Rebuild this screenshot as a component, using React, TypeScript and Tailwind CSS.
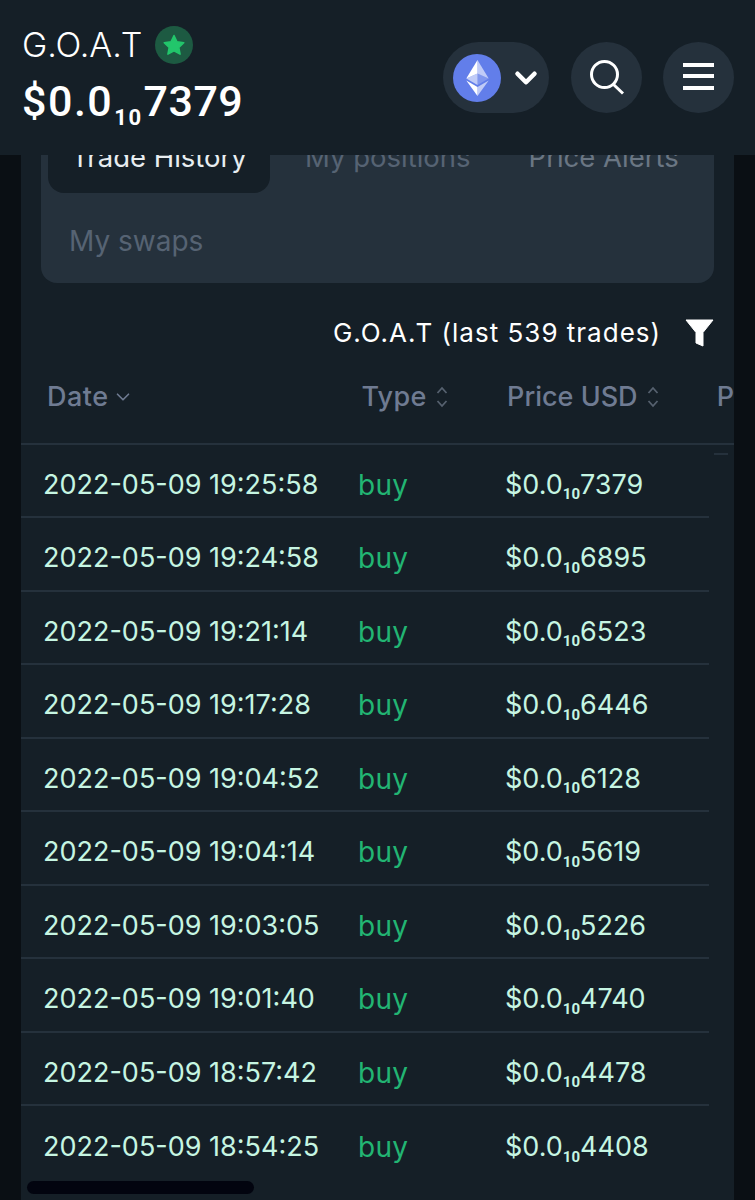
import { ChevronDown } from 'lucide-react'

const trades = [
  { date: '2022-05-09 19:25:58', price: '7379' },
  { date: '2022-05-09 19:24:58', price: '6895' },
  { date: '2022-05-09 19:21:14', price: '6523' },
  { date: '2022-05-09 19:17:28', price: '6446' },
  { date: '2022-05-09 19:04:52', price: '6128' },
  { date: '2022-05-09 19:04:14', price: '5619' },
  { date: '2022-05-09 19:03:05', price: '5226' },
  { date: '2022-05-09 19:01:40', price: '4740' },
  { date: '2022-05-09 18:57:42', price: '4478' },
  { date: '2022-05-09 18:54:25', price: '4408' },
]

function EthIcon() {
  return (
    <svg width="48" height="48" viewBox="0 0 48 48">
      <circle cx="24" cy="24" r="24" fill="#627eea" />
      <path d="M24.5 6v13.5l11.2 5z" fill="#fff" fillOpacity="0.6" />
      <path d="M24.5 6L13.3 24.5l11.2-5z" fill="#fff" />
      <path d="M24.5 33v9l11.2-15.6z" fill="#fff" fillOpacity="0.6" />
      <path d="M24.5 42v-9l-11.2-6.6z" fill="#fff" />
      <path d="M24.5 30.9l11.2-6.4-11.2-5z" fill="#fff" fillOpacity="0.2" />
      <path d="M13.3 24.5l11.2 6.4V19.5z" fill="#fff" fillOpacity="0.6" />
    </svg>
  )
}

function SortIcon() {
  return (
    <svg width="12" height="22" viewBox="0 0 12 22" fill="none" stroke="#56616f" strokeWidth="1.8" className="ml-[9px]">
      <path d="M1.5 7L6 2l4.500 5" />
      <path d="M1.5 15L6 20l4.500-5" />
    </svg>
  )
}

function App() {
  return (
    <div className="h-[1200px] overflow-hidden bg-[#0a0f14] font-['Inter',sans-serif]">
      {/* top bar */}
      <header className="relative z-10 flex h-[155px] items-start justify-between bg-[#151f27] pl-[22px] pr-[21px]">
        <div className="pt-[25px]">
          <div className="flex items-center">
            <span className="text-[34px] leading-[40px] font-light text-white">G.O.A.T</span>
            <span className="ml-[13px] flex h-[38px] w-[38px] items-center justify-center rounded-full bg-[#1d5a42]">
              <svg width="24" height="24" viewBox="0 0 24 24">
                <path
                  d="M12 2.500l3 6.300 6.800.9-5 4.700 1.300 6.800-6.100-3.300-6.100 3.300 1.300-6.800-5-4.700 6.800-.9z"
                  fill="#22c66b"
                  stroke="#22c66b"
                  strokeWidth="1.5"
                  strokeLinejoin="round"
                />
              </svg>
            </span>
          </div>
          <div className="mt-[11px] font-['Roboto',sans-serif] text-[43px] leading-[50px] font-medium tracking-[1.5px] text-white">
            $0.0
            <sub className="mx-[1px] text-[22px] leading-none font-bold tracking-[1.5px] align-[-3px]">10</sub>
            <span className="tracking-[0.5px]">7379</span>
          </div>
        </div>
        <div className="mt-[42px] flex items-center gap-[21px]">
          <button className="mr-[1px] flex h-[71px] w-[106px] items-center rounded-full bg-[#25313c] pl-[10px]">
            <EthIcon />
            <ChevronDown size={34} strokeWidth={3.2} className="ml-[8px] text-white" />
          </button>
          <button className="flex h-[71px] w-[71px] items-center justify-center rounded-full bg-[#25313c]">
            <svg width="38" height="38" viewBox="0 0 38 38" fill="none" stroke="#fff" strokeWidth="3">
              <circle cx="16.500" cy="15.500" r="13" />
              <path d="M25 25l10 9.500" />
            </svg>
          </button>
          <button className="flex h-[71px] w-[71px] flex-col items-center justify-center gap-[7.500px] rounded-full bg-[#25313c] pb-[3px]">
            <span className="h-[4px] w-[31px] bg-white" />
            <span className="h-[4px] w-[31px] bg-white" />
            <span className="h-[4px] w-[31px] bg-white" />
          </button>
        </div>
      </header>

      {/* panel */}
      <main className="mx-[21px] h-[1045px] overflow-hidden bg-[#151f27]">
        <div className="mx-[20px] -mt-[8px] h-[136px] rounded-b-[16px] bg-[#25313c] px-[7px]">
          <div className="flex h-[46px] items-start text-[27.500px] leading-[26px] whitespace-nowrap">
            <div className="flex h-[46px] w-[222px] justify-center rounded-b-[16px] bg-[#151f27] text-[#e8edf0]">
              <span className="-mt-[3px]">Trade History</span>
            </div>
            <span className="ml-[35px] -mt-[3px] text-[#566373]">My positions</span>
            <span className="ml-[58px] -mt-[3px] text-[#6a7683]">Price Alerts</span>
          </div>
          <div className="pl-[21px] pt-[28px] text-[28px] leading-[40px] text-[#566373]">My swaps</div>
        </div>

        <div className="flex h-[94px] items-center justify-end pr-[20px] pt-[5px]">
          <span className="text-[26px] tracking-[1px] text-white">G.O.A.T (last 539 trades)</span>
          <svg width="29" height="28" viewBox="0 0 29 28" className="ml-[24px]" fill="#fff">
            <path d="M1 1h27L18 13.500V27l-7-3V13.500z" stroke="#fff" strokeLinejoin="round" />
          </svg>
        </div>

        <div className="w-[713px] overflow-hidden">
          <div className="flex h-[67.500px] items-start border-b-2 border-[#25313c] pl-[26px] text-[27px] font-medium whitespace-nowrap text-[#6f7b92]">
            <div className="flex w-[315px] items-center tracking-[0.5px]">
              Date
              <ChevronDown size={22} strokeWidth={1.8} className="ml-[3px] text-[#6f7b92]" />
            </div>
            <div className="flex w-[146px] items-center tracking-[0.3px]">
              Type
              <SortIcon />
            </div>
            <div className="flex w-[210px] items-center">
              Price USD
              <SortIcon />
            </div>
            <div>P</div>
          </div>

          <div className="flex">
            <div className="w-[688px] shrink-0">
              {trades.map((t, i) => (
                <div
                  key={t.date}
                  className={`flex h-[73.500px] items-center pl-[22px] pt-[9px] text-[27px] whitespace-nowrap text-[#c6f5e2] ${
                    i < trades.length - 1 ? 'border-b-2 border-[#25313c]' : ''
                  }`}
                >
                  <div className="w-[315px]">{t.date}</div>
                  <div className="w-[147px] text-[28px] tracking-[0.3px] text-[#22b573]">buy</div>
                  <div>
                    $0.0<sub className="font-['Roboto',sans-serif] text-[15px] leading-none font-bold align-[-2px]">10</sub>
                    {t.price}
                  </div>
                </div>
              ))}
            </div>
            <div className="ml-[5px] mt-[8px] h-[2px] w-[14px] bg-[#25313c]" />
          </div>
        </div>

        <div className="ml-[6px] mt-[1px] h-[13px] w-[227px] rounded-full bg-[#02040f]" />
      </main>
    </div>
  )
}

export default App
